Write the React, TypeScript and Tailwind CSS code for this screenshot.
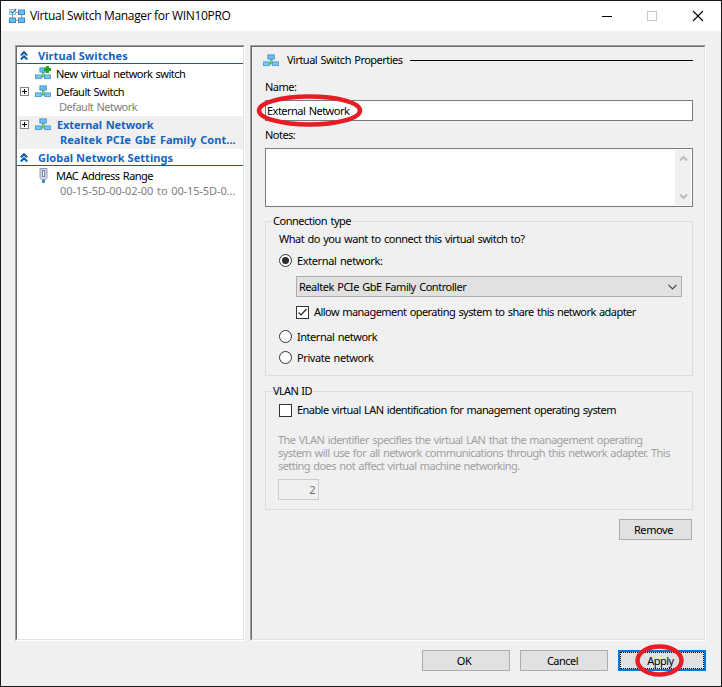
import type { ReactNode } from "react";

function SwitchIcon({ plus = false }: { plus?: boolean }) {
  return (
    <svg width="17" height="15" viewBox="0 0 17 15" className="block shrink-0">
      <path d="M7 6h2.400v3l2 1.500v1H5v-1L7 9z" fill="#4cc04f" />
      <path d="M8.200 6v4.500" stroke="#8be088" strokeWidth=".8" />
      <rect x="4.900" y="1.900" width="6.400" height="4.200" fill="#6fbdf0" stroke="#4391c6" strokeWidth=".9" />
      <rect x=".5" y="8.900" width="5.800" height="3.700" fill="#7cc6f4" stroke="#4f9bcd" strokeWidth=".9" />
      <rect x="9.600" y="8.900" width="5.800" height="3.700" fill="#7cc6f4" stroke="#4f9bcd" strokeWidth=".9" />
      {plus && <path d="M12.500 0v7M9 3.500h7" stroke="#17a81b" strokeWidth="2.800" />}
    </svg>
  );
}

function AppIcon() {
  return (
    <svg width="18" height="17" viewBox="0 0 18 17" className="block shrink-0">
      <path d="M8 4.500h3M13.500 7v3M8 12.500h3M4.500 7v3" stroke="#9a9a9a" />
      <rect x="1.500" y="1.500" width="6" height="5" fill="#f4faff" stroke="#8dbde2" />
      <path d="M2.500 3l2 2.300L8 .8" stroke="#2c7dbd" strokeWidth="1.200" fill="none" />
      <rect x="10.500" y="2" width="6" height="4.500" fill="#66bdf3" stroke="#3f8cc4" />
      <rect x="1.500" y="10" width="6" height="4.500" fill="#66bdf3" stroke="#3f8cc4" />
      <rect x="10.500" y="10" width="6" height="4.500" fill="#66bdf3" stroke="#3f8cc4" />
    </svg>
  );
}

function NicIcon() {
  return (
    <svg width="9" height="17" viewBox="0 0 9 17" className="block shrink-0">
      <rect x="3" y="12" width="3" height="4" fill="#3f93c0" />
      <path d="M1 1.500h7v9l-1.500 2h-4L1 10.500z" fill="#cfd8e6" stroke="#8e9cb2" />
      <rect x="3.500" y="3.500" width="2" height="6" fill="#fff" stroke="#76859e" />
    </svg>
  );
}

function Chevrons() {
  return (
    <svg width="8" height="9" viewBox="0 0 8 9" className="block shrink-0">
      <path d="M.8 4.400L4 1.200l3.200 3.200M.8 8.400L4 5.200l3.200 3.200" fill="none" stroke="#0a56a8" strokeWidth="2" />
    </svg>
  );
}

function Expander() {
  return (
    <svg width="9" height="9" viewBox="0 0 9 9" className="block shrink-0">
      <rect x=".5" y=".5" width="8" height="8" fill="#fff" stroke="#848484" />
      <path d="M2 4.500h5M4.500 2v5" stroke="#000" />
    </svg>
  );
}

function Sunken({ className, children }: { className: string; children: ReactNode }) {
  return (
    <div className="border border-t-[#a0a0a0] border-r-white border-b-white border-l-[#a0a0a0]">
      <div className={"h-[594px] border border-t-[#696969] border-r-[#e3e3e3] border-b-[#e3e3e3] border-l-[#696969] " + className}>
        {children}
      </div>
    </div>
  );
}

function TreeHeader({ label, tracking }: { label: string; tracking: string }) {
  return (
    <div className="flex h-[17px] items-center border-b border-[#0f609b] pl-[3px] font-bold text-[#1464c0]">
      <Chevrons />
      <span className={"ml-[10px] [word-spacing:0px] " + tracking}>{label}</span>
    </div>
  );
}

function Radio({ checked = false }: { checked?: boolean }) {
  return (
    <span className="flex size-[13px] shrink-0 items-center justify-center rounded-full border border-[#333] bg-white">
      {checked && <span className="size-[7px] rounded-full bg-[#2b2b2b]" />}
    </span>
  );
}

function Check({ checked = false }: { checked?: boolean }) {
  return (
    <span className="flex size-[13px] shrink-0 items-center justify-center border border-[#333] bg-white">
      {checked && (
        <svg width="11" height="11" viewBox="0 0 11 11">
          <path d="M1.500 5.500L4 8l5.500-6" fill="none" stroke="#222" strokeWidth="1.200" />
        </svg>
      )}
    </span>
  );
}

export default function App() {
  return (
    <div className="h-[687px] w-[722px] overflow-hidden border border-[#1b1819] bg-[#f0f0f0] font-['Noto_Sans','DejaVu_Sans',sans-serif] text-[11px] leading-[13px] tracking-[-0.52px] [word-spacing:1px] whitespace-nowrap text-black">
      <header className="flex h-[30px] items-center bg-white pl-[7px]">
        <AppIcon />
        <h1 className="ml-[4px] font-['Open_Sans','Noto_Sans',sans-serif] text-[12px] leading-4 tracking-[-0.33px] [word-spacing:0px]">Virtual Switch Manager for WIN10PRO</h1>
        <div className="ml-auto flex items-center pr-[17px]">
          <svg width="102" height="12" viewBox="0 0 102 12" fill="none">
            <path d="M0 6.500h10" stroke="#000" />
            <rect x="45.500" y="1.500" width="9" height="9" stroke="#c8c8c8" />
            <path d="M91 1l10 10M101 1L91 11" stroke="#000" strokeWidth="1.100" />
          </svg>
        </div>
      </header>

      <main className="flex gap-[5px] pt-[14px] pl-[14px]">
        <Sunken className="w-[228px] bg-white">
          <TreeHeader label="Virtual Switches" tracking="tracking-[0.08px]" />
          <div className="flex h-[18px] items-center pl-[18px]">
            <SwitchIcon plus />
            <span className="ml-1">New virtual network switch</span>
          </div>
          <div className="flex h-[18px] items-center pl-[3px]">
            <Expander />
            <span className="ml-[6px]"><SwitchIcon /></span>
            <span className="ml-1">Default Switch</span>
          </div>
          <div className="h-4 pl-[42px] text-[#808080]">Default Network</div>
          <div className="h-[33px] bg-[#f0f0f0] font-bold text-[#1464c0]">
            <div className="flex h-[17px] items-center pl-[3px]">
              <Expander />
              <span className="ml-[6px]"><SwitchIcon /></span>
              <span className="ml-[5px] tracking-[-0.1px]">External Network</span>
            </div>
            <div className="pl-[43px] tracking-[0.04px]">Realtek PCIe GbE Family Cont...</div>
          </div>
          <TreeHeader label="Global Network Settings" tracking="tracking-[0.04px]" />
          <div className="flex h-[19px] items-center pl-[22px]">
            <NicIcon />
            <span className="ml-2">MAC Address Range</span>
          </div>
          <div className="-mt-px pl-[43px] tracking-[-0.1px]">
            <span className="text-[#808080]">00-15-5D-00-02-00 to 00-15-5D-0...</span>
          </div>
        </Sunken>

        <Sunken className="w-[454px] pr-[11px] pl-[13px]">
          <div className="flex h-[26px] items-center">
            <span className="-ml-[2px]"><SwitchIcon /></span>
            <span className="-mt-px ml-[7px]">Virtual Switch Properties</span>
            <span className="mt-px ml-2 h-px flex-1 bg-black" />
          </div>
          <div className="mt-[7px] h-[20px]">Name:</div>
          <div className="relative flex h-[21px] items-center border border-[#7a7a7a] bg-white pb-px pl-px">
            External Network
            <svg className="absolute -top-[7px] -left-[10px]" width="107" height="34" viewBox="0 0 107 34" fill="none">
              <ellipse cx="53.500" cy="16.500" rx="50.500" ry="14" stroke="#e81c24" strokeWidth="4.500" />
            </svg>
          </div>
          <div className="mt-[7px] h-5">Notes:</div>
          <div className="flex h-[59px] justify-end border border-[#7a7a7a] bg-white p-px">
            <div className="flex w-4 flex-col items-center justify-between bg-[#f0f0f0] py-[5px]">
              <svg width="9" height="7" viewBox="0 0 9 7"><path d="M1 5.500L4.500 2 8 5.500" fill="none" stroke="#bcbcbc" strokeWidth="2" /></svg>
              <svg width="9" height="7" viewBox="0 0 9 7"><path d="M1 1.500L4.500 5 8 1.500" fill="none" stroke="#bcbcbc" strokeWidth="2" /></svg>
            </div>
          </div>

          <fieldset className="mt-[7px] h-[162px] border border-[#dcdcdc] pl-[13px]">
            <legend className="-ml-[7px] h-[15px] px-[1px] tracking-[-0.49px]">Connection type</legend>
            <div className="mt-[3px] h-[20px] tracking-[-0.51px]">What do you want to connect this virtual switch to?</div>
            <div className="flex h-[16px] items-center gap-[5px] tracking-[-0.38px]">
              <Radio checked />
              <span>External network:</span>
            </div>
            <div className="mt-[8px] ml-[17px] flex h-[21px] w-[386px] items-center justify-between border border-[#adadad] bg-[#e1e1e1] pr-1 pl-[2px] tracking-[-0.47px]">
              Realtek PCIe GbE Family Controller
              <svg width="9" height="6" viewBox="0 0 9 6"><path d="M.5.8l4 4 4-4" fill="none" stroke="#444" strokeWidth="1.200" /></svg>
            </div>
            <div className="mt-[7px] ml-[17px] flex h-[16px] items-center gap-[5px]">
              <Check checked />
              <span className="-mt-px tracking-[-0.56px]">Allow management operating system to share this network adapter</span>
            </div>
            <div className="mt-[8px] flex h-[17px] items-center gap-[5px] tracking-[-0.47px]"><Radio />Internal network</div>
            <div className="mt-[4px] flex h-[17px] items-center gap-[5px] tracking-[-0.41px]"><Radio />Private network</div>
          </fieldset>

          <fieldset className="mt-[8px] h-[126px] border border-[#dcdcdc] pl-[13px]">
            <legend className="-ml-[7px] h-[15px] px-[1px] tracking-[-0.65px]">VLAN ID</legend>
            <div className="mt-[3px] flex h-[16px] items-center gap-[5px]">
              <Check />
              <span className="-mt-px tracking-[-0.56px]">Enable virtual LAN identification for management operating system</span>
            </div>
            <p className="mt-[15px] -ml-px tracking-[-0.55px] text-[#a0a0a0]">
              The VLAN identifier specifies the virtual LAN that the management operating
              <br />
              system will use for all network communications through this network adapter. This
              <br />
              setting does not affect virtual machine networking.
            </p>
            <div className="mt-[7px] -ml-px flex h-[21px] w-[41px] items-center justify-end border border-[#cccccc] pr-[3px] text-[#6d6d6d]">2</div>
          </fieldset>
          <div className="mt-[9px] mr-px ml-auto flex h-[21px] w-[73px] items-center justify-center border border-[#adadad] bg-[#e1e1e1] pr-[4px] tracking-[-0.4px]">Remove</div>
        </Sunken>
      </main>

      <footer className="mt-[9px] flex justify-end gap-[10px] pr-[15px]">
        <div className="flex h-[21px] w-[88px] items-center justify-center border border-[#adadad] bg-[#e1e1e1] pr-1">OK</div>
        <div className="flex h-[21px] w-[88px] items-center justify-center border border-[#adadad] bg-[#e1e1e1] pr-[3px]">Cancel</div>
        <div className="relative flex h-[21px] w-[88px] border-2 border-[#0078d7] bg-[#e1e1e1]">
          <div className="flex flex-1 items-center justify-center border border-dotted border-black pr-[3px]">Apply</div>
          <svg className="absolute -top-[8px] left-[15px]" width="50" height="34" viewBox="0 0 50 34" fill="none">
            <ellipse cx="24.500" cy="16.500" rx="22" ry="14" stroke="#e81c24" strokeWidth="4.500" />
          </svg>
        </div>
      </footer>
    </div>
  );
}
